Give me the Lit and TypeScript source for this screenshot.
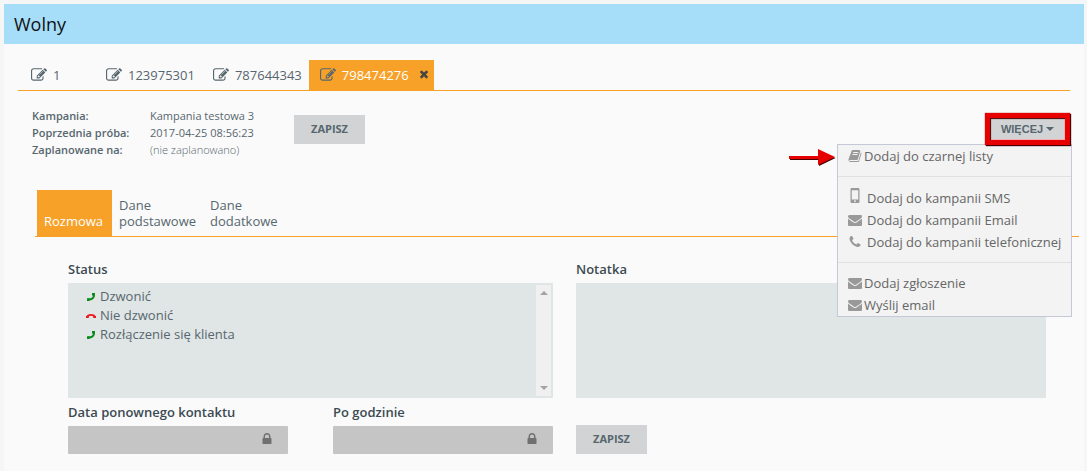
import { LitElement, html, css, svg } from "lit";
import { customElement, property, state } from "lit/decorators.js";

const GLYPHS: Record<string, string> = {
  edit: "M888 1184l116-116-152-152-116 116v56h96v96h56zm440-720q-16-16-33 1l-350 350q-17 17-1 33t33-1l350-350q17-17 1-33zm80 594v190q0 119-84.5 203.5t-203.5 84.5h-832q-119 0-203.5-84.5t-84.5-203.5v-832q0-119 84.5-203.5t203.5-84.5h832q63 0 117 25 15 7 18 23 3 17-9 29l-49 49q-14 14-32 8-23-6-45-6h-832q-66 0-113 47t-47 113v832q0 66 47 113t113 47h832q66 0 113-47t47-113v-126q0-13 9-22l64-64q15-15 35-7t20 29zm-96-738l288 288-672 672h-288v-288zm444 132l-92 92-288-288 92-92q28-28 68-28t68 28l152 152q28 28 28 68t-28 68z",
  envelope: "M1792 710v794q0 66-47 113t-113 47h-1472q-66 0-113-47t-47-113v-794q44 49 101 87 362 246 497 345 57 42 92.5 65.5t94.5 48 110 24.5h2q51 0 110-24.5t94.5-48 92.5-65.5q170-123 498-345 57-39 100-87zm0-294q0 79-49 151t-122 123q-376 261-468 325-10 7-42.5 31t-54 38.5-52 32.5-57.5 27-50 9h-2q-23 0-50-9t-57.5-27-52-32.5-54-38.5-42.5-31q-91-64-262-182.5t-205-142.5q-62-42-117-115.5t-55-136.5q0-78 41.5-130t118.5-52h1472q65 0 112.5 47t47.5 113z",
  phone: "M1600 1240q0 27-10 70.5t-21 68.5q-21 50-122 106-94 51-186 51-27 0-53-3.5t-57.5-12.5-47-14.5-55.5-20.5-49-18q-98-35-175-83-127-79-264-216t-216-264q-48-77-83-175-3-9-18-49t-20.5-55.5-14.5-47-12.5-57.5-3.5-53q0-92 51-186 56-101 106-122 25-11 68.5-21t70.5-10q14 0 21 3 18 6 53 76 11 19 30 54t35 63.5 31 53.5q3 4 17.5 25t21.5 35.5 7 28.5q0 20-28.5 50t-62 55-62 53-28.5 46q0 9 5 22.5t8.5 20.5 14 24 11.5 19q76 137 174 235t235 174q2 1 19 11.5t24 14 20.5 8.5 22.5 5q18 0 46-28.5t53-62 55-62 50-28.5q14 0 28.5 7t35.5 21.5 25 17.5q25 15 53.5 31t63.5 35 54 30q70 35 76 53 3 7 3 21z",
  book: "M1703 478q40 57 18 129l-275 906q-19 64-76.5 107.5t-122.5 43.5h-923q-77 0-148.5-53.5t-99.5-131.5q-24-67-2-127 0-4 3-27t4-37q1-8-3-21.5t-3-19.5q2-11 8-21t16.5-23.5 16.5-23.5q23-38 45-91.5t30-91.5q3-10 .5-30t-.5-28q3-11 17-28t17-23q21-36 42-92t25-90q1-9-2.5-32t.5-28q4-13 22-30.5t22-22.5q19-26 42.5-84.5t27.5-96.5q1-8-3-25.5t-2-26.5q2-8 9-18t18-23 17-21q8-12 16.5-30.5t15-35 16-36 19.5-32 26.5-23.5 36-11.5 47.5 5.5l-1 3q38-9 51-9h761q74 0 114 56t18 130l-274 906q-36 119-71.5 153.5t-128.5 34.5h-869q-27 0-38 15-11 16-1 43 24 70 144 70h923q29 0 56-15.5t35-41.5l300-987q7-22 5-57 38 15 59 43zm-1064 2q-4 13 2 22.5t20 9.5h608q13 0 25.5-9.5t16.5-22.5l21-64q4-13-2-22.5t-20-9.5h-608q-13 0-25.5 9.5t-16.5 22.5zm-83 256q-4 13 2 22.5t20 9.5h608q13 0 25.5-9.5t16.5-22.5l21-64q4-13-2-22.5t-20-9.5h-608q-13 0-25.5 9.5t-16.5 22.5z",
  lock: "M640 768h512v-192q0-106-75-181t-181-75-181 75-75 181v192zm832 96v576q0 40-28 68t-68 28h-960q-40 0-68-28t-28-68v-576q0-40 28-68t68-28h32v-192q0-184 132-316t316-132 316 132 132 316v192h32q40 0 68 28t28 68z",
  mobile: "M480 -128h832q66 0 113 47t47 113v1600q0 66-47 113t-113 47h-832q-66 0-113-47t-47-113v-1600q0-66 47-113t113-47zm0 288v1184h832v-1184zm416 1290a110 110 0 1 0 .1 0z",
  close: "M1490 1322q0 40-28 68l-136 136q-28 28-68 28t-68-28l-294-294-294 294q-28 28-68 28t-68-28l-136-136q-28-28-28-68t28-68l294-294-294-294q-28-28-28-68t28-68l136-136q28-28 68-28t68 28l294 294 294-294q28-28 68-28t68 28l136 136q28 28 28 68t-28 68l-294 294 294 294q28 28 28 68z",
};

@customElement("app-icon")
export class AppIcon extends LitElement {
  @property() name = "edit";

  static styles = css`
    :host { display: block; width: 15px; height: 15px; flex: none; }
    .glyph { display: block; width: 100%; height: 100%; overflow: visible; fill: currentColor; fill-rule: evenodd; }
  `;

  render() {
    return html`<svg class="glyph" viewBox="0 0 1792 1792" aria-hidden="true">${svg`<path d=${GLYPHS[this.name]}></path>`}</svg>`;
  }
}

interface MenuEntry { icon: string; label: string; }

@customElement("app-root")
export class AppRoot extends LitElement {
  @state() private open = true;

  private contacts = ["1", "123975301", "787644343", "798474276"];

  private menu: MenuEntry[][] = [
    [{ icon: "book", label: "Dodaj do czarnej listy" }],
    [
      { icon: "mobile", label: "Dodaj do kampanii SMS" },
      { icon: "envelope", label: "Dodaj do kampanii Email" },
      { icon: "phone", label: "Dodaj do kampanii telefonicznej" },
    ],
    [
      { icon: "envelope", label: "Dodaj zgłoszenie" },
      { icon: "envelope", label: "Wyślij email" },
    ],
  ];

  private statuses = [
    { label: "Dzwonić", call: true },
    { label: "Nie dzwonić", call: false },
    { label: "Rozłączenie się klienta", call: true },
  ];

  static styles = css`
    :host {
      display: block;
      box-sizing: border-box;
      min-height: 100vh;
      padding: 4px 3px 0 4px;
      background: #f5f7f6;
      color: #57676f;
      font: 13px/16px "Open Sans", "Noto Sans", sans-serif;
    }
    *, *::before, *::after { box-sizing: border-box; }
    button, input, textarea { font: inherit; color: inherit; border: 0; margin: 0; border-radius: 0; }
    ul { list-style: none; margin: 0; padding: 0; }
    .panel { background: #fafafa; min-height: calc(100vh - 4px); }
    .title {
      margin: 0; padding: 0 10px; height: 40px;
      background: #a6ddf9; color: #111;
      font-size: 18px; line-height: 40px; font-weight: 400;
    }
    .contacts {
      display: flex; margin: 16px 14px 0; padding-left: 2px;
      border-bottom: 1px solid #f7a128;
    }
    .contact {
      display: flex; align-items: center; gap: 6px;
      min-width: 75px; height: 30px; padding: 0 7px 0 11px;
      background: none; text-align: left;
    }
    .contact app-icon { width: 16px; height: 16px; }
    .current { display: flex; background: #f7a128; }
    .current .contact { color: #fff; }
    .current app-icon { color: #57676f; }
    .close { display: flex; align-items: flex-start; padding: 8px 4px 0 2px; background: none; }
    .close app-icon { width: 12px; height: 12px; color: #444; }
    .details { display: flex; align-items: flex-start; margin: 16px 14px 0; padding-left: 14px; }
    .facts {
      display: grid; grid-template-columns: 118px 104px;
      margin: 0 40px 0 0; font-size: 11px; line-height: 17px;
    }
    .facts dt { font-weight: 600; white-space: nowrap; }
    .facts dd { margin: 0; white-space: nowrap; }
    .facts .none { font-weight: 300; }
    .save {
      width: 71px; height: 29px; padding: 0 0 1px; background: #d1d3d4;
      font-size: 11px; font-weight: 700;
    }
    .details .save { margin-top: 8px; }
    .more { position: relative; margin: 6px 0 0 auto; }
    .highlight {
      position: relative; z-index: 1;
      display: flex; border: 5px solid #e60000;
      box-shadow: 1px 1px 1px #400, 0 0 1px #a00;
    }
    .toggle {
      display: flex; align-items: center; justify-content: center; gap: 3px;
      width: 75px; height: 22px; padding: 0 0 1px;
      background: #d1d3d4; box-shadow: inset 1px 1px 1px #400, inset -1px -1px 0 #f7b0b0;
      font: 700 11px/16px "Liberation Sans", Arial, sans-serif;
    }
    .caret { border: 4px solid transparent; border-top-color: #57676f; border-bottom: 0; }
    .menu {
      position: absolute; top: 31px; right: -2px; width: 235px;
      background: #f3f3f3; border: 1px solid #c5c8d8; color: #666;
    }
    .group { padding: 10px 0 9px; border-top: 1px solid #e1e1e1; }
    .group:first-child { border-top: 0; padding: 0 0 9px; }
    .group:last-child { padding: 9px 0 0; }
    .entry {
      display: flex; align-items: center; gap: 2px;
      width: 100%; height: 22px; padding: 0 0 0 10px;
      background: none; text-align: left; white-space: nowrap;
    }
    .entry app-icon { width: 14px; height: 14px; color: #999; }
    .group:nth-child(2) .entry { gap: 5px; }
    .entry app-icon[name="mobile"] { margin-bottom: 4px; }
    .pointer { position: absolute; top: 35px; right: 234px; width: 47px; height: 20px; }
    .sections {
      display: flex; align-items: flex-end; margin: 32px 5px 0 31px; padding-left: 2px;
      border-bottom: 1px solid #f7a128;
    }
    .section {
      display: flex; align-items: flex-end; width: 91px; height: 46px;
      padding: 0 0 7px 7px; background: none; text-align: left;
    }
    .section.active { width: 75px; background: #f7a128; color: #fff; }
    .form {
      display: grid; grid-template-columns: 485fr 470fr; column-gap: 23px;
      margin: 24px 38px 0 64px;
    }
    .label {
      display: block; height: 22px; line-height: 16px;
      color: #3c4a52; font-weight: 600;
    }
    .list, .note { height: 115px; background: #e0e5e5; border-radius: 1px; }
    .list { display: flex; justify-content: space-between; padding: 2px; }
    .options { padding: 2px 0 0 16px; line-height: 19px; }
    .option { display: flex; align-items: center; gap: 4px; }
    .handset { width: 10px; height: 10px; flex: none; }
    .scroll {
      display: flex; flex-direction: column; justify-content: space-between; align-items: center;
      width: 15px; padding: 6px 0; background: #f0f0f0;
    }
    .up { border: 4px solid transparent; border-bottom-color: #a3a3a3; border-top: 0; }
    .down { border: 4px solid transparent; border-top-color: #a3a3a3; border-bottom: 0; }
    .note { display: block; width: 100%; padding: 4px; resize: none; }
    .dates { display: flex; justify-content: space-between; padding-top: 6px; }
    .date { width: 220px; }
    .locked { display: grid; align-items: center; }
    .locked > * { grid-area: 1 / 1; }
    .locked input { width: 100%; height: 28px; padding: 0 32px 0 6px; background: #c5c5c5; border-radius: 1px; }
    .locked app-icon { justify-self: end; width: 14px; height: 14px; margin: 0 14px 2px 0; color: #707070; }
    .submit { padding-top: 27px; }
  `;

  private handset(call: boolean) {
    return call
      ? html`<svg class="handset" viewBox="0 0 10 10" aria-hidden="true">
          <path d="M8 2.500Q8.300 7.600 2.200 7.600" fill="none" stroke="#0a8a1a" stroke-width="2"></path>
          <path d="M6 1h3v2.400H6zM1 6.200h2.600V9H1z" fill="#0a8a1a"></path>
        </svg>`
      : html`<svg class="handset" viewBox="0 0 10 10" aria-hidden="true">
          <path d="M1 6Q1.500 3.800 5 3.800T9 6" fill="none" stroke="#f01820" stroke-width="1.800"></path>
          <path d="M0 5h2.800v2H0zM7.200 5H10v2H7.200z" fill="#f01820"></path>
        </svg>`;
  }

  render() {
    return html`
      <main class="panel">
        <h1 class="title">Wolny</h1>
        <nav class="contacts">
          ${this.contacts.map((c, i) => {
            const tab = html`<button class="contact"><app-icon name="edit"></app-icon>${c}</button>`;
            return i < this.contacts.length - 1
              ? tab
              : html`<div class="current">${tab}<button class="close" aria-label="Zamknij"><app-icon name="close"></app-icon></button></div>`;
          })}
        </nav>
        <section class="details">
          <dl class="facts">
            <dt>Kampania:</dt><dd>Kampania testowa 3</dd>
            <dt>Poprzednia próba:</dt><dd>2017-04-25 08:56:23</dd>
            <dt>Zaplanowane na:</dt><dd class="none">(nie zaplanowano)</dd>
          </dl>
          <button class="save">ZAPISZ</button>
          <div class="more">
            <div class="highlight">
              <button class="toggle" aria-expanded=${this.open} @click=${() => (this.open = !this.open)}>
                WIĘCEJ<span class="caret"></span>
              </button>
            </div>
            ${this.open
              ? html`<div class="menu">
                    ${this.menu.map((g) => html`<ul class="group">
                      ${g.map((m) => html`<li><button class="entry"><app-icon name=${m.icon}></app-icon>${m.label}</button></li>`)}
                    </ul>`)}
                  </div>
                  <svg class="pointer" viewBox="0 0 47 20" aria-hidden="true">
                    <path d="M1 10h28V3l17.500 7L30 18v-6H1z" fill="#400"></path>
                    <path d="M0 8h29V1l17 8-17 8v-6H0z" fill="#e60000"></path>
                  </svg>`
              : null}
          </div>
        </section>
        <nav class="sections">
          <button class="section active">Rozmowa</button>
          <button class="section">Dane podstawowe</button>
          <button class="section">Dane dodatkowe</button>
        </nav>
        <form class="form" @submit=${(e: Event) => e.preventDefault()}>
          <div>
            <span class="label" id="status">Status</span>
            <div class="list">
              <ul class="options" role="listbox" aria-labelledby="status">
                ${this.statuses.map((s) => html`<li class="option" role="option">${this.handset(s.call)}${s.label}</li>`)}
              </ul>
              <div class="scroll"><span class="up"></span><span class="down"></span></div>
            </div>
          </div>
          <div>
            <label class="label" for="note">Notatka</label>
            <textarea class="note" id="note"></textarea>
          </div>
          <div class="dates">
            <div class="date">
              <label class="label" for="date">Data ponownego kontaktu</label>
              <div class="locked"><input id="date" type="text" readonly /><app-icon name="lock"></app-icon></div>
            </div>
            <div class="date">
              <label class="label" for="hour">Po godzinie</label>
              <div class="locked"><input id="hour" type="text" readonly /><app-icon name="lock"></app-icon></div>
            </div>
          </div>
          <div class="submit"><button class="save">ZAPISZ</button></div>
        </form>
      </main>
    `;
  }
}
